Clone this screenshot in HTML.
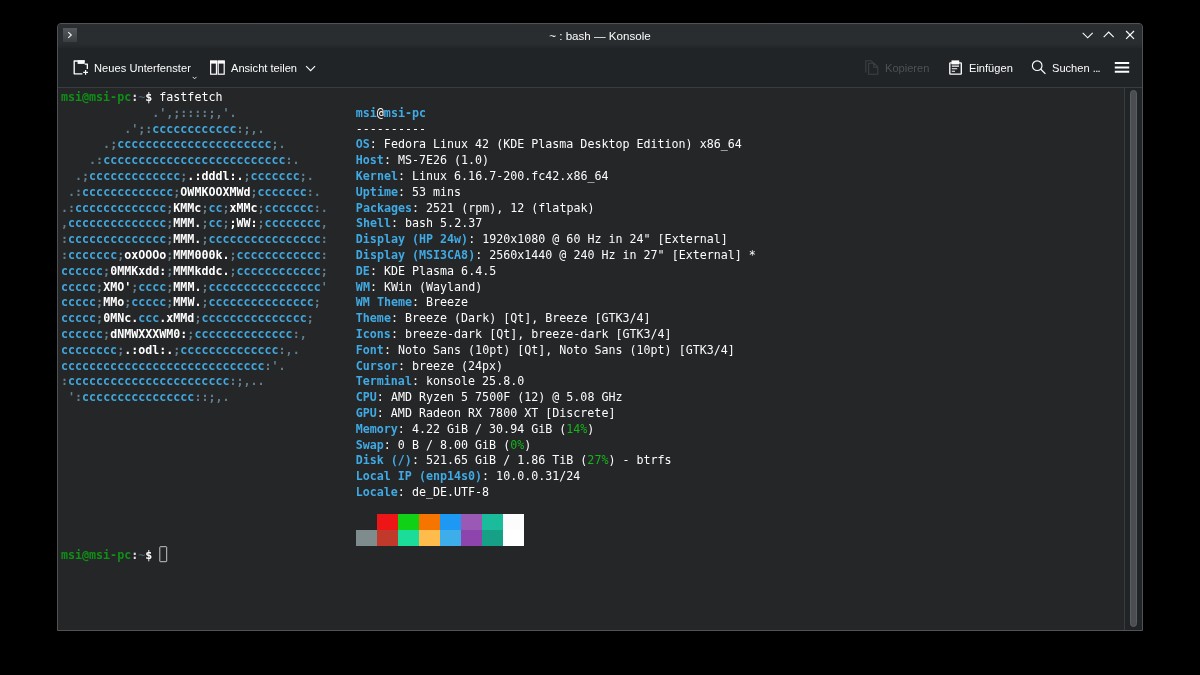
<!DOCTYPE html>
<html lang="de">
<head>
<meta charset="utf-8">
<title>~ : bash — Konsole</title>
<style>
html,body{margin:0;padding:0;background:#000;}
body{width:1200px;height:675px;position:relative;overflow:hidden;font-family:"Liberation Sans","DejaVu Sans",sans-serif;}
#win{position:absolute;left:57px;top:23px;width:1086px;height:608px;box-sizing:border-box;border:1px solid #505356;border-radius:4px 4px 0 0;background:#252628;overflow:hidden;}
#title{position:absolute;left:0;top:0;width:1084px;height:24px;background:linear-gradient(#2c2f33,#2a2d30 12%,#2a2d30 80%,#232629);}
#tool{position:absolute;left:0;top:24px;width:1084px;height:39px;background:#212427;border-bottom:1px solid #3a3d40;}
#ttext{position:absolute;left:0;width:1084px;top:4px;text-align:center;color:#fcfcfc;font-size:11.6px;line-height:16px;white-space:nowrap;will-change:transform;}
.tb{position:absolute;color:#fcfcfc;font-size:11.1px;line-height:16px;white-space:nowrap;top:36px;will-change:transform;}
.tb.dis{color:#4d5155;}
svg{position:absolute;overflow:visible;}
#term{position:absolute;left:0;top:64px;width:1066px;height:542px;background:#252628;}
#sb{position:absolute;left:1066px;top:64px;width:18px;height:542px;background:#212427;border-left:1px solid #393c3f;box-sizing:border-box;}
#sbh{position:absolute;left:5px;top:2px;width:7px;height:537px;box-sizing:border-box;border:1px solid #5b5e61;background:#4b4d50;border-radius:3.5px;}
pre{position:absolute;margin:0;left:3px;top:2.1px;font-family:"DejaVu Sans Mono","Liberation Mono",monospace;font-size:11.66px;line-height:15.79px;color:#fcfcfc;white-space:pre;will-change:transform;}
pre b{font-weight:bold;}
pre i{font-style:normal;}
.k{color:#40aae4;}
.l1{color:#41a6dc;}
.l2{color:#ffffff;}
.lp{color:#63808f;}
.g{color:#11d116;}
.pg{color:#14b41a;}
.pb{color:#0f9016;}
.pc{color:#e0e0e0;}
.t{color:#4d6272;}
.cb{position:absolute;width:21.1px;height:15.9px;}
</style>
</head>
<body>
<div id="win">
  <div id="title">
    <svg style="left:5px;top:4px" width="14" height="14" viewBox="0 0 14 14"><defs><linearGradient id="kg" x1="0" y1="0" x2="0" y2="1"><stop offset="0" stop-color="#55585c"/><stop offset="1" stop-color="#3a3d41"/></linearGradient></defs><rect width="14" height="14" fill="url(#kg)"/><path d="M5.2 4.2 L8.3 7 L5.2 9.8" fill="none" stroke="#f0f0f0" stroke-width="1.1"/></svg>
    <div id="ttext">~ : bash — Konsole</div>
    <svg style="left:1023px;top:7px" width="12" height="8" viewBox="0 0 12 8"><g transform="translate(0.7 0.3)"><path d="M1 1.5 L6 6.5 L11 1.5" fill="none" stroke="#fcfcfc" stroke-width="1.1"/></g></svg>
    <svg style="left:1044px;top:6px" width="12" height="8" viewBox="0 0 12 8"><g transform="translate(0.7 0.6)"><path d="M1 6.5 L6 1.5 L11 6.5" fill="none" stroke="#fcfcfc" stroke-width="1.1"/></g></svg>
    <svg style="left:1067px;top:6px" width="10" height="10" viewBox="0 0 10 10"><g transform="translate(0.3 0.2)"><path d="M0.8 0.8 L8.7 8.7 M8.7 0.8 L0.8 8.7" fill="none" stroke="#fcfcfc" stroke-width="1.2"/></g></svg>
  </div>
  <div id="tool">
  </div>
  <!-- toolbar icons & labels (positioned relative to window) -->
  <svg style="left:15px;top:36px" width="16" height="16" viewBox="0 0 16 16"><path d="M9.4 13.85 H1.2 V0.95 H11.7 M11.7 4.1 H14.35 V9" fill="none" stroke="#fcfcfc" stroke-width="1.35" stroke-linejoin="round"/><rect x="4.6" y="0.3" width="7.1" height="3.6" fill="#fcfcfc"/><path d="M12.6 10 V14.8 M10.2 12.4 H15" stroke="#fcfcfc" stroke-width="1.2" fill="none"/></svg>
  <div class="tb" style="left:36.4px;letter-spacing:0.04px">Neues Unterfenster</div>
  <svg style="left:134px;top:52px" width="5" height="3" viewBox="0 0 5 3"><g transform="translate(0.4 0.6)"><path d="M0.3 0.3 L2.2 2.2 L4.1 0.3" fill="none" stroke="#fcfcfc" stroke-width="0.9"/></g></svg>
  <svg style="left:151px;top:36px" width="16" height="15" viewBox="0 0 16 15"><g transform="translate(0.7 0.1)"><rect x="0.95" y="1" width="5.8" height="13.1" fill="none" stroke="#fcfcfc" stroke-width="1.2"/><rect x="8.5" y="1" width="6" height="13.1" fill="none" stroke="#fcfcfc" stroke-width="1.2"/><rect x="0.35" y="0.5" width="7" height="3" fill="#fcfcfc"/><rect x="7.9" y="0.5" width="7.2" height="3" fill="#fcfcfc"/></g></svg>
  <div class="tb" style="left:172.6px">Ansicht teilen</div>
  <svg style="left:247px;top:41px" width="10" height="6" viewBox="0 0 10 6"><g transform="translate(0.6 0.6)"><path d="M0.5 0.6 L5 5.1 L9.5 0.6" fill="none" stroke="#fcfcfc" stroke-width="1.1"/></g></svg>

  <svg style="left:807px;top:36px" width="14" height="15" viewBox="0 0 14 15"><path d="M0.8 12.5 V0.7 H6 L9 3.6 M3.6 14.3 V3.2 H9 L12.8 7 V14.3 Z M8.8 3.4 V7.2 H12.6" fill="none" stroke="#3c4044" stroke-width="1.1"/></svg>
  <div class="tb dis" style="left:827.4px">Kopieren</div>
  <svg style="left:891px;top:36px" width="14" height="15" viewBox="0 0 14 15"><rect x="0.8" y="2.9" width="11.5" height="11.2" fill="none" stroke="#fcfcfc" stroke-width="1.35" rx="0.5"/><rect x="2.5" y="0.4" width="7.7" height="4" fill="#fcfcfc"/><path d="M2.8 6.1 H10 M2.8 8.7 H8.2 M2.8 11.3 H6" stroke="#fcfcfc" stroke-width="1.1" fill="none"/></svg>
  <div class="tb" style="left:910.8px">Einfügen</div>
  <svg style="left:973px;top:35px" width="15" height="15" viewBox="0 0 15 15"><g transform="translate(0.4 0.85)"><circle cx="5.8" cy="5.8" r="4.8" fill="none" stroke="#fcfcfc" stroke-width="1.15"/><path d="M9.2 9.2 L14 14" stroke="#fcfcfc" stroke-width="1.3" fill="none"/></g></svg>
  <div class="tb" style="left:994px">Suchen <span style="letter-spacing:-0.65px">...</span></div>
  <svg style="left:1056px;top:38px" width="15" height="12" viewBox="0 0 15 12"><g transform="translate(0.8 0)"><path d="M0 1.05 H14.4 M0 5.5 H14.4 M0 9.85 H14.4" stroke="#fcfcfc" stroke-width="2" fill="none"/></g></svg>

  <div id="term">
<pre><b class="pb">msi@msi-pc</b><b class="pc">:</b><i class="t">~</i><b>$</b> fastfetch
             <b class="lp">.',;::::;,'.</b>                 <b class="k">msi</b>@<b class="k">msi-pc</b>
         <b class="lp">.';:</b><b class="l1">cccccccccccc</b><b class="lp">:;,.</b>             ----------
      <b class="lp">.;</b><b class="l1">cccccccccccccccccccccc</b><b class="lp">;.</b>          <b class="k">OS</b>: Fedora Linux 42 (KDE Plasma Desktop Edition) x86_64
    <b class="lp">.:</b><b class="l1">cccccccccccccccccccccccccc</b><b class="lp">:.</b>        <b class="k">Host</b>: MS-7E26 (1.0)
  <b class="lp">.;</b><b class="l1">ccccccccccccc</b><b class="lp">;</b><b class="l2">.:dddl:.</b><b class="lp">;</b><b class="l1">ccccccc</b><b class="lp">;.</b>      <b class="k">Kernel</b>: Linux 6.16.7-200.fc42.x86_64
 <b class="lp">.:</b><b class="l1">ccccccccccccc</b><b class="lp">;</b><b class="l2">OWMKOOXMWd</b><b class="lp">;</b><b class="l1">ccccccc</b><b class="lp">:.</b>     <b class="k">Uptime</b>: 53 mins
<b class="lp">.:</b><b class="l1">ccccccccccccc</b><b class="lp">;</b><b class="l2">KMMc</b><b class="lp">;</b><b class="l1">cc</b><b class="lp">;</b><b class="l2">xMMc</b><b class="lp">;</b><b class="l1">ccccccc</b><b class="lp">:.</b>    <b class="k">Packages</b>: 2521 (rpm), 12 (flatpak)
<b class="lp">,</b><b class="l1">cccccccccccccc</b><b class="lp">;</b><b class="l2">MMM.</b><b class="lp">;</b><b class="l1">cc</b><b class="lp">;</b><b class="l2">;WW:</b><b class="lp">;</b><b class="l1">cccccccc</b><b class="lp">,</b>    <b class="k">Shell</b>: bash 5.2.37
<b class="lp">:</b><b class="l1">cccccccccccccc</b><b class="lp">;</b><b class="l2">MMM.</b><b class="lp">;</b><b class="l1">cccccccccccccccc</b><b class="lp">:</b>    <b class="k">Display (HP 24w)</b>: 1920x1080 @ 60 Hz in 24" [External]
<b class="lp">:</b><b class="l1">ccccccc</b><b class="lp">;</b><b class="l2">oxOOOo</b><b class="lp">;</b><b class="l2">MMM000k.</b><b class="lp">;</b><b class="l1">cccccccccccc</b><b class="lp">:</b>    <b class="k">Display (MSI3CA8)</b>: 2560x1440 @ 240 Hz in 27" [External] *
<b class="l1">cccccc</b><b class="lp">;</b><b class="l2">0MMKxdd:</b><b class="lp">;</b><b class="l2">MMMkddc.</b><b class="lp">;</b><b class="l1">cccccccccccc</b><b class="lp">;</b>    <b class="k">DE</b>: KDE Plasma 6.4.5
<b class="l1">ccccc</b><b class="lp">;</b><b class="l2">XMO'</b><b class="lp">;</b><b class="l1">cccc</b><b class="lp">;</b><b class="l2">MMM.</b><b class="lp">;</b><b class="l1">cccccccccccccccc</b><b class="lp">'</b>    <b class="k">WM</b>: KWin (Wayland)
<b class="l1">ccccc</b><b class="lp">;</b><b class="l2">MMo</b><b class="lp">;</b><b class="l1">ccccc</b><b class="lp">;</b><b class="l2">MMW.</b><b class="lp">;</b><b class="l1">ccccccccccccccc</b><b class="lp">;</b>     <b class="k">WM Theme</b>: Breeze
<b class="l1">ccccc</b><b class="lp">;</b><b class="l2">0MNc.</b><b class="l1">ccc</b><b class="l2">.xMMd</b><b class="lp">;</b><b class="l1">ccccccccccccccc</b><b class="lp">;</b>      <b class="k">Theme</b>: Breeze (Dark) [Qt], Breeze [GTK3/4]
<b class="l1">cccccc</b><b class="lp">;</b><b class="l2">dNMWXXXWM0:</b><b class="lp">;</b><b class="l1">cccccccccccccc</b><b class="lp">:,</b>       <b class="k">Icons</b>: breeze-dark [Qt], breeze-dark [GTK3/4]
<b class="l1">cccccccc</b><b class="lp">;</b><b class="l2">.:odl:.</b><b class="lp">;</b><b class="l1">cccccccccccccc</b><b class="lp">:,.</b>        <b class="k">Font</b>: Noto Sans (10pt) [Qt], Noto Sans (10pt) [GTK3/4]
<b class="l1">ccccccccccccccccccccccccccccc</b><b class="lp">:'.</b>          <b class="k">Cursor</b>: breeze (24px)
<b class="lp">:</b><b class="l1">ccccccccccccccccccccccc</b><b class="lp">:;,..</b>             <b class="k">Terminal</b>: konsole 25.8.0
 <b class="lp">':</b><b class="l1">cccccccccccccccc</b><b class="lp">::;,.</b>                  <b class="k">CPU</b>: AMD Ryzen 5 7500F (12) @ 5.08 GHz
                                          <b class="k">GPU</b>: AMD Radeon RX 7800 XT [Discrete]
                                          <b class="k">Memory</b>: 4.22 GiB / 30.94 GiB (<i class="pg">14%</i>)
                                          <b class="k">Swap</b>: 0 B / 8.00 GiB (<i class="pg">0%</i>)
                                          <b class="k">Disk (/)</b>: 521.65 GiB / 1.86 TiB (<i class="pg">27%</i>) - btrfs
                                          <b class="k">Local IP (enp14s0)</b>: 10.0.0.31/24
                                          <b class="k">Locale</b>: de_DE.UTF-8



<b class="pb">msi@msi-pc</b><b class="pc">:</b><i class="t">~</i><b>$</b> </pre>
    <div class="cb" style="left:319.1px;top:426.3px;background:#ed1515"></div>
    <div class="cb" style="left:340.1px;top:426.3px;background:#11d116"></div>
    <div class="cb" style="left:361.2px;top:426.3px;background:#f67400"></div>
    <div class="cb" style="left:382.2px;top:426.3px;background:#1d99f3"></div>
    <div class="cb" style="left:403.3px;top:426.3px;background:#9b59b6"></div>
    <div class="cb" style="left:424.3px;top:426.3px;background:#1abc9c"></div>
    <div class="cb" style="left:445.4px;top:426.3px;background:#fcfcfc"></div>
    <div class="cb" style="left:298px;top:442.1px;background:#7f8c8d"></div>
    <div class="cb" style="left:319.1px;top:442.1px;background:#c0392b"></div>
    <div class="cb" style="left:340.1px;top:442.1px;background:#1cdc9a"></div>
    <div class="cb" style="left:361.2px;top:442.1px;background:#fdbc4b"></div>
    <div class="cb" style="left:382.2px;top:442.1px;background:#3daee9"></div>
    <div class="cb" style="left:403.3px;top:442.1px;background:#8e44ad"></div>
    <div class="cb" style="left:424.3px;top:442.1px;background:#16a085"></div>
    <div class="cb" style="left:445.4px;top:442.1px;background:#ffffff"></div>
    <svg style="left:101px;top:458px" width="9" height="17" viewBox="0 0 9 17"><rect x="0.8" y="0.7" width="6.9" height="15" fill="none" stroke="#c6c6c6" stroke-width="1" rx="0.6"/></svg>
  </div>
  <div id="sb"><div id="sbh"></div></div>
</div>
</body>
</html>
